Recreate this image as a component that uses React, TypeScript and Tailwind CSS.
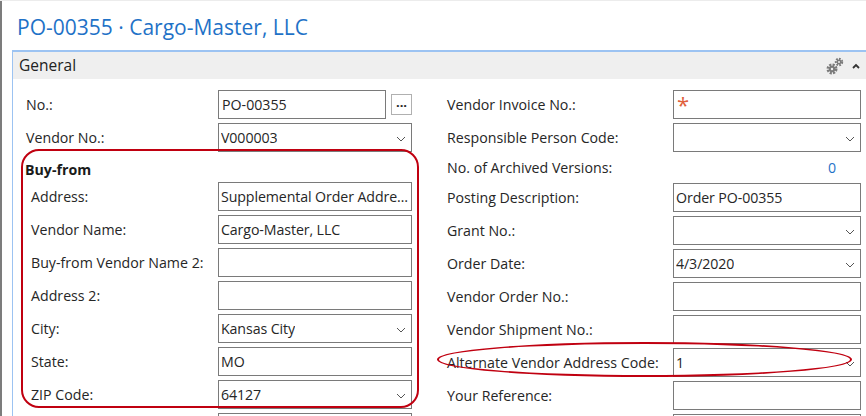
import React from 'react';

type FieldProps = {
    label: string;
    value?: string;
    dropdown?: boolean;
    labelW: string;
    inputW: string;
    indent?: boolean;
    required?: boolean;
};

function Chevron() {
    return (
        <svg width="10" height="6" viewBox="0 0 10 6" className="ml-auto mr-[4px] mt-[3px] flex-none">
            <path d="M1 1 L5 5 L9 1" fill="none" stroke="#555" strokeWidth="1" />
        </svg>
    );
}

function Field({ label, value, dropdown, labelW, inputW, indent, required }: FieldProps) {
    return (
        <div className="flex items-center h-[29px]">
            <div className={`${labelW} flex-none ${indent ? 'pl-[5px]' : ''}`}>{label}</div>
            <div className={`${inputW} h-full flex-none border border-[#7a7a7a] flex items-center pl-[2px] pr-[1px] overflow-hidden whitespace-nowrap`}>
                {required && <span className="text-[#e0603c] text-[22px] leading-[22px] h-[22px] -mt-[2px] ml-[1px]">*</span>}
                <span className="truncate tracking-[-0.1px]">{value}</span>
                {dropdown && <Chevron />}
            </div>
        </div>
    );
}

function Gears() {
    return (
        <svg width="18" height="18" viewBox="0 0 18 18">
            {/* big cog */}
            <circle cx="6" cy="12" r="4" fill="none" stroke="#7a7a7a" strokeWidth="3" strokeDasharray="2 1.15" />
            <circle cx="6" cy="12" r="3.2" fill="#7a7a7a" />
            <circle cx="6" cy="12" r="1.2" fill="#efefef" />
            {/* small cog */}
            <circle cx="13" cy="5" r="3" fill="none" stroke="#7a7a7a" strokeWidth="2.4" strokeDasharray="1.6 1.15" />
            <circle cx="13" cy="5" r="2.4" fill="#7a7a7a" />
            <circle cx="13" cy="5" r="1" fill="#efefef" />
        </svg>
    );
}

export default function App() {
    const left = 'w-[192px]';
    const leftIn = 'w-[194px]';
    const right = 'w-[226px]';
    const rightIn = 'w-[188px]';

    return (
        <div
            className="relative w-[866px] h-[416px] overflow-hidden bg-white border-t border-[#ececec] text-[14.2px] text-[#262626]"
            style={{ fontFamily: '"Open Sans", "Noto Sans", sans-serif' }}
        >
            <div className="h-full border-l-2 border-[#7c7c7c]">
                {/* title */}
                <div className="h-[49px] flex items-center pl-[15px] pt-[4px]">
                    <h1 className="text-[21px] text-[#1f72c7]">PO-00355 · Cargo-Master, LLC</h1>
                </div>

                {/* General panel */}
                <div className="ml-[10px] border-l border-t-2 border-[#9cc3f2]">
                    <div className="h-[27px] bg-[#efefef] flex items-center pl-[6px] pr-[6px]">
                        <span className="text-[15.5px] text-[#222]">General</span>
                        <div className="ml-auto flex items-center gap-[8px]">
                            <Gears />
                            <svg width="8" height="6" viewBox="0 0 8 6">
                                <path d="M1 5 L4 2 L7 5" fill="none" stroke="#333" strokeWidth="1.8" />
                            </svg>
                        </div>
                    </div>

                    <div className="flex pt-[11px]">
                        {/* left column */}
                        <div className="pl-[13px] flex flex-col gap-[4px] w-[434px] flex-none">
                            <div className="flex items-center h-[29px]">
                                <div className={`${left} flex-none`}>No.:</div>
                                <div className="w-[168px] h-full flex-none border border-[#7a7a7a] flex items-center pl-[3px]">PO-00355</div>
                                <div className="ml-[5px] w-[21px] h-[21px] border border-[#b0b0b0] flex items-center justify-center text-[13px] font-bold leading-none pb-[4px]">...</div>
                            </div>
                            <Field label="Vendor No.:" value="V000003" dropdown labelW={left} inputW={leftIn} />
                            <div className="h-[22px] flex items-center pt-[5px] font-bold text-[#1a1a1a] -ml-[1px]">Buy-from</div>
                            <Field label="Address:" value="Supplemental Order Address" labelW={left} inputW={leftIn} indent />
                            <Field label="Vendor Name:" value="Cargo-Master, LLC" labelW={left} inputW={leftIn} indent />
                            <Field label="Buy-from Vendor Name 2:" labelW={left} inputW={leftIn} indent />
                            <Field label="Address 2:" labelW={left} inputW={leftIn} indent />
                            <Field label="City:" value="Kansas City" dropdown labelW={left} inputW={leftIn} indent />
                            <Field label="State:" value="MO" labelW={left} inputW={leftIn} indent />
                            <Field label="ZIP Code:" value="64127" dropdown labelW={left} inputW={leftIn} indent />
                            <Field label="" labelW={left} inputW={leftIn} indent />
                        </div>

                        {/* right column */}
                        <div className="flex flex-col gap-[4px] flex-none">
                            <Field label="Vendor Invoice No.:" required labelW={right} inputW={rightIn} />
                            <Field label="Responsible Person Code:" dropdown labelW={right} inputW={rightIn} />
                            <div className="flex items-center h-[23px]">
                                <div className={`${right} flex-none`}>No. of Archived Versions:</div>
                                <div className={`${rightIn} text-right pr-[25px] text-[#1f72c7]`}>0</div>
                            </div>
                            <Field label="Posting Description:" value="Order PO-00355" labelW={right} inputW={rightIn} />
                            <Field label="Grant No.:" dropdown labelW={right} inputW={rightIn} />
                            <Field label="Order Date:" value="4/3/2020" dropdown labelW={right} inputW={rightIn} />
                            <Field label="Vendor Order No.:" labelW={right} inputW={rightIn} />
                            <Field label="Vendor Shipment No.:" labelW={right} inputW={rightIn} />
                            <Field label="Alternate Vendor Address Code:" value="1" dropdown labelW={right} inputW={rightIn} />
                            <Field label="Your Reference:" labelW={right} inputW={rightIn} />
                            <Field label="" labelW={right} inputW={rightIn} />
                        </div>
                    </div>
                </div>
            </div>

            {/* red annotation marks */}
            <div className="absolute left-[21px] top-[148px] w-[398px] h-[259px] border-2 border-[#c00010] rounded-[18px] pointer-events-none" />
            <div className="absolute left-[437px] top-[341px] w-[415px] h-[35px] border-2 border-[#c00010] rounded-[50%] pointer-events-none" />
        </div>
    );
}
